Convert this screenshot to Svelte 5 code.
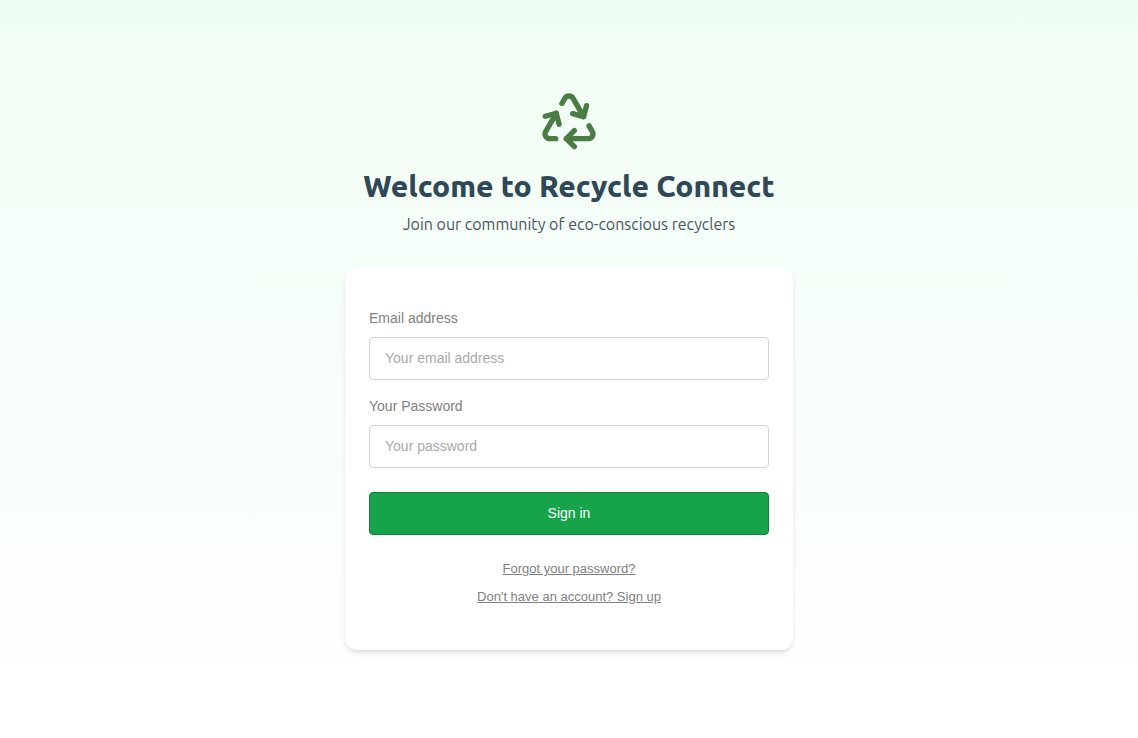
<script>
  let email = $state('');
  let password = $state('');
</script>

<main class="page">
  <div class="column">
    <header class="intro">
      <svg class="logo" viewBox="0 0 24 24" aria-hidden="true">
        <path d="M7 19H4.815a1.83 1.83 0 0 1-1.57-.881 1.785 1.785 0 0 1-.004-1.784L7.196 9.5" />
        <path d="M11 19h8.203a1.83 1.83 0 0 0 1.556-.89 1.784 1.784 0 0 0 0-1.775l-1.226-2.12" />
        <path d="m14 16-3 3 3 3" />
        <path d="M8.293 13.596 7.196 9.5 3.1 10.598" />
        <path d="m9.344 5.811 1.093-1.892A1.83 1.83 0 0 1 11.985 3a1.784 1.784 0 0 1 1.546.888l3.943 6.843" />
        <path d="m13.378 9.633 4.096 1.098 1.097-4.096" />
      </svg>
      <h1>Welcome to Recycle Connect</h1>
      <p>Join our community of eco-conscious recyclers</p>
    </header>

    <section class="card">
      <form onsubmit={(event) => event.preventDefault()}>
        <div class="field">
          <label for="email">Email address</label>
          <input id="email" type="email" placeholder="Your email address" autocomplete="email" bind:value={email} />
        </div>
        <div class="field">
          <label for="password">Your Password</label>
          <input id="password" type="password" placeholder="Your password" autocomplete="current-password" bind:value={password} />
        </div>
        <button type="submit">Sign in</button>
      </form>
      <nav class="links">
        <a href="#forgot">Forgot your password?</a>
        <a href="#signup">Don't have an account? Sign up</a>
      </nav>
    </section>
  </div>
</main>

<style>
  :global(body) {
    margin: 0;
  }

  .page {
    box-sizing: border-box;
    min-height: 100vh;
    padding: 16px;
    display: flex;
    align-items: center;
    justify-content: center;
    background: linear-gradient(to bottom, #f0fdf4, #ffffff);
    font-family: "Liberation Sans", Arial, sans-serif;
  }

  .column {
    width: 100%;
    max-width: 448px;
    display: flex;
    flex-direction: column;
    gap: 32px;
  }

  .intro {
    display: flex;
    flex-direction: column;
    align-items: center;
    text-align: center;
    font-family: Ubuntu, "Noto Sans", sans-serif;
  }

  .logo {
    width: 64px;
    height: 64px;
    margin-bottom: 16px;
    fill: none;
    stroke: #4a7c43;
    stroke-width: 2;
    stroke-linecap: round;
    stroke-linejoin: round;
  }

  h1 {
    margin: 0 0 8px;
    font-size: 30px;
    line-height: 36px;
    font-weight: 800;
    color: #2f4858;
  }

  p {
    margin: 0;
    font-size: 16px;
    line-height: 24px;
    color: #4b5563;
  }

  .card {
    padding: 42px 24px 46px;
    border-radius: 12px;
    background: #ffffff;
    box-shadow: 0 4px 6px -1px rgb(0 0 0 / 0.1), 0 2px 4px -2px rgb(0 0 0 / 0.1);
  }

  form {
    display: flex;
    flex-direction: column;
    gap: 18px;
  }

  .field {
    display: flex;
    flex-direction: column;
    gap: 11px;
  }

  label {
    font-size: 14px;
    line-height: 16px;
    color: #808080;
  }

  input,
  button {
    box-sizing: border-box;
    width: 100%;
    height: 43px;
    padding: 0 15px 2px;
    border-radius: 4px;
    font-family: inherit;
    font-size: 14px;
  }

  input {
    border: 1px solid #d3d3d3;
    background: #ffffff;
    color: #333333;
  }

  input::placeholder {
    color: #a9a9a9;
    opacity: 1;
  }

  button {
    margin-top: 6px;
    border: 1px solid #15803d;
    background: #16a34a;
    color: #ffffff;
    cursor: pointer;
  }

  .links {
    margin-top: 26px;
    display: flex;
    flex-direction: column;
    align-items: center;
    gap: 13px;
  }

  a {
    font-size: 13px;
    line-height: 15px;
    color: #808080;
  }
</style>
